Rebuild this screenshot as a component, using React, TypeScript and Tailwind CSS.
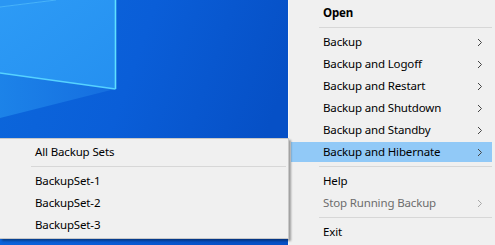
import React from "react";

const font = { fontFamily: '"Noto Sans", "Open Sans", sans-serif' };

function Chevron({ disabled }: { disabled?: boolean }) {
  return (
    <svg width="6" height="9" viewBox="0 0 6 9" className="shrink-0">
      <path
        d="M1 1 L4.5 4.5 L1 8"
        fill="none"
        stroke={disabled ? "#a8a8a8" : "#444444"}
        strokeWidth="1"
      />
    </svg>
  );
}

function Row({
  label,
  bold,
  sub,
  active,
  disabled,
}: {
  label: string;
  bold?: boolean;
  sub?: boolean;
  active?: boolean;
  disabled?: boolean;
}) {
  return (
    <div className="h-[22px] flex items-center pl-[2px] pr-[3px]">
      <div
        className={
          "flex-1 h-[20px] flex items-center pl-[32px] pr-[9px] " +
          (active ? "bg-[#91c9f7]" : "")
        }
      >
        <span
          className={
            "flex-1 text-[11.5px] tracking-[-0.15px] leading-none " +
            (bold ? "font-bold " : "") +
            (disabled ? "text-[#6d6d6d]" : "text-black")
          }
        >
          {label}
        </span>
        {sub && <Chevron disabled={disabled} />}
      </div>
    </div>
  );
}

function Sep() {
  return (
    <div className="h-[7px] flex items-center pl-[30px] pr-[3px]">
      <div className="flex-1 h-px bg-[#d7d7d7]" />
    </div>
  );
}

function SubRow({ label }: { label: string }) {
  return (
    <div className="h-[22px] flex items-center pl-[35px]">
      <span className="text-[11.5px] tracking-[-0.15px] leading-none text-black">
        {label}
      </span>
    </div>
  );
}

export default function App() {
  return (
    <div
      className="relative w-[495px] h-[245px] overflow-hidden flex bg-[#f0f0f0]"
      style={font}
    >
      <div className="w-[288px] h-full shrink-0">
        <svg width="288" height="245" viewBox="0 0 288 245">
          <defs>
            <linearGradient id="bg" x1="0" y1="0" x2="1" y2="0.3">
              <stop offset="0" stopColor="#0c68dc" />
              <stop offset="0.5" stopColor="#0a5ed8" />
              <stop offset="1" stopColor="#0650c6" />
            </linearGradient>
            <linearGradient id="pane" x1="0" y1="0" x2="1" y2="1">
              <stop offset="0" stopColor="#2d9bf6" />
              <stop offset="1" stopColor="#2590f0" />
            </linearGradient>
            <linearGradient id="ray" x1="0" y1="0" x2="1" y2="0">
              <stop offset="0" stopColor="#1e86ea" />
              <stop offset="1" stopColor="#166fe0" />
            </linearGradient>
          </defs>
          <rect width="288" height="245" fill="url(#bg)" />
          <polygon points="0,73 115,89 0,118" fill="url(#ray)" opacity="0.9" />
          <polygon points="0,7 56,0 115,0 115,89 0,73" fill="url(#pane)" />
          <polygon points="0,0 56,0 0,7" fill="#2a96f3" />
          <line x1="0" y1="7" x2="56" y2="0" stroke="#48b4fa" strokeWidth="1" />
          <line x1="115.5" y1="0" x2="115.5" y2="89" stroke="#5fe0ff" strokeWidth="1.6" />
          <line x1="0" y1="73" x2="115.5" y2="89" stroke="#56d2ff" strokeWidth="1.3" />
        </svg>
      </div>
      <div className="flex-1 h-full bg-[#f0f0f0] border-l border-[#f8f8f8] pt-[2px] flex flex-col">
        <Row label="Open" bold />
        <Sep />
        <Row label="Backup" sub />
        <Row label="Backup and Logoff" sub />
        <Row label="Backup and Restart" sub />
        <Row label="Backup and Shutdown" sub />
        <Row label="Backup and Standby" sub />
        <Row label="Backup and Hibernate" sub active />
        <Sep />
        <Row label="Help" />
        <Row label="Stop Running Backup" sub disabled />
        <Sep />
        <Row label="Exit" />
      </div>

      <div className="absolute left-0 top-[138px] w-[289px] h-[101px] bg-[#f0f0f0] border border-[#c8c8c8] border-l-0 pt-[2px] shadow-[2px_2px_2px_rgba(0,0,0,0.35)]">
        <SubRow label="All Backup Sets" />
        <div className="h-[7px] flex items-center pl-[31px] pr-[2px]">
          <div className="flex-1 h-px bg-[#d7d7d7]" />
        </div>
        <SubRow label="BackupSet-1" />
        <SubRow label="BackupSet-2" />
        <SubRow label="BackupSet-3" />
      </div>
    </div>
  );
}
